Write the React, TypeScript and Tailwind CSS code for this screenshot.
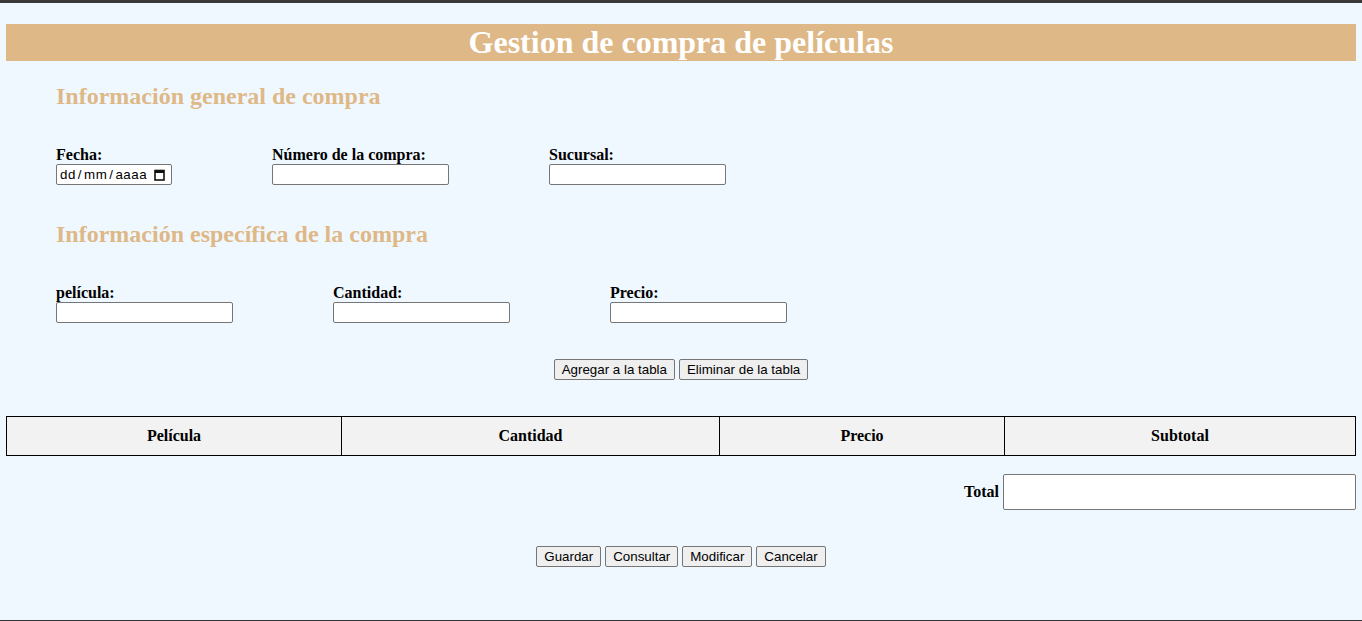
const serif = "font-['Liberation_Serif','Times_New_Roman',serif]";
const sans = "font-['Liberation_Sans',Arial,sans-serif]";

function TextBox() {
  return <div className="w-[177px] h-[21px] bg-white border border-[#767676] rounded-[2px]" />;
}

function Btn({ children }: { children: string }) {
  return (
    <button
      className={`${sans} h-[21px] px-[7px] text-[13.33px] leading-none text-black bg-[#efefef] border border-[#767676] rounded-[2px]`}
    >
      {children}
    </button>
  );
}

function Field({ label, children, width }: { label: string; children: React.ReactNode; width: string }) {
  return (
    <div className={`${width} mr-[100px] shrink-0`}>
      <div className="text-[16px] leading-[18px] font-bold text-black">{label}</div>
      {children}
    </div>
  );
}

function DateBox() {
  return (
    <div
      className={`${sans} w-[116px] h-[21px] bg-white border border-[#767676] rounded-[2px] flex items-center pl-[3px] pr-[6px] text-[13.33px] tracking-[0.5px] text-black`}
    >
      <span>dd</span>
      <span className="px-[2px]">/</span>
      <span>mm</span>
      <span className="px-[2px]">/</span>
      <span>aaaa</span>
      <svg className="ml-auto" width="11" height="12" viewBox="0 0 11 12">
        <rect x="1" y="1.5" width="9" height="9.5" fill="none" stroke="#111" strokeWidth="1.6" />
        <rect x="1" y="1.5" width="9" height="2.5" fill="#111" />
      </svg>
    </div>
  );
}

export default function App() {
  return (
    <div className={`${serif} w-[1362px] h-[621px] bg-[#f0f8ff] border-t-[3px] border-t-[#3a3a3a] border-b border-b-[#333] overflow-hidden`}>
      <div className="px-[6px] pt-[21px]">
        <h1 className="bg-[#deb887] text-white text-[32px] leading-[37px] font-bold text-center">
          Gestion de compra de películas
        </h1>

        <div className="pl-[50px]">
          <h2 className="mt-[22px] text-[24px] leading-[27px] font-bold text-[#deb887]">
            Información general de compra
          </h2>
          <div className="flex mt-[36px]">
            <Field label="Fecha:" width="w-[116px]">
              <DateBox />
            </Field>
            <Field label="Número de la compra:" width="w-[177px]">
              <TextBox />
            </Field>
            <Field label="Sucursal:" width="w-[177px]">
              <TextBox />
            </Field>
          </div>

          <h2 className="mt-[36px] text-[24px] leading-[27px] font-bold text-[#deb887]">
            Información específica de la compra
          </h2>
          <div className="flex mt-[36px]">
            <Field label="película:" width="w-[177px]">
              <TextBox />
            </Field>
            <Field label="Cantidad:" width="w-[177px]">
              <TextBox />
            </Field>
            <Field label="Precio:" width="w-[177px]">
              <TextBox />
            </Field>
          </div>
        </div>

        <div className="flex justify-center gap-[4px] mt-[36px]">
          <Btn>Agregar a la tabla</Btn>
          <Btn>Eliminar de la tabla</Btn>
        </div>

        <table className="mt-[36px] w-full border-collapse">
          <thead>
            <tr className="bg-[#f2f2f2] text-[16px] font-bold text-black">
              <th className="w-[335px] h-[39px] p-0 border border-black">Película</th>
              <th className="w-[378px] p-0 border border-black">Cantidad</th>
              <th className="w-[285px] p-0 border border-black">Precio</th>
              <th className="p-0 border border-black">Subtotal</th>
            </tr>
          </thead>
        </table>

        <div className="flex justify-end items-center gap-[4px] mt-[18px]">
          <span className="text-[16px] font-bold text-black">Total</span>
          <div className="w-[353px] h-[36px] bg-white border border-[#767676] rounded-[2px]" />
        </div>

        <div className="flex justify-center gap-[4px] mt-[36px]">
          <Btn>Guardar</Btn>
          <Btn>Consultar</Btn>
          <Btn>Modificar</Btn>
          <Btn>Cancelar</Btn>
        </div>
      </div>
    </div>
  );
}
